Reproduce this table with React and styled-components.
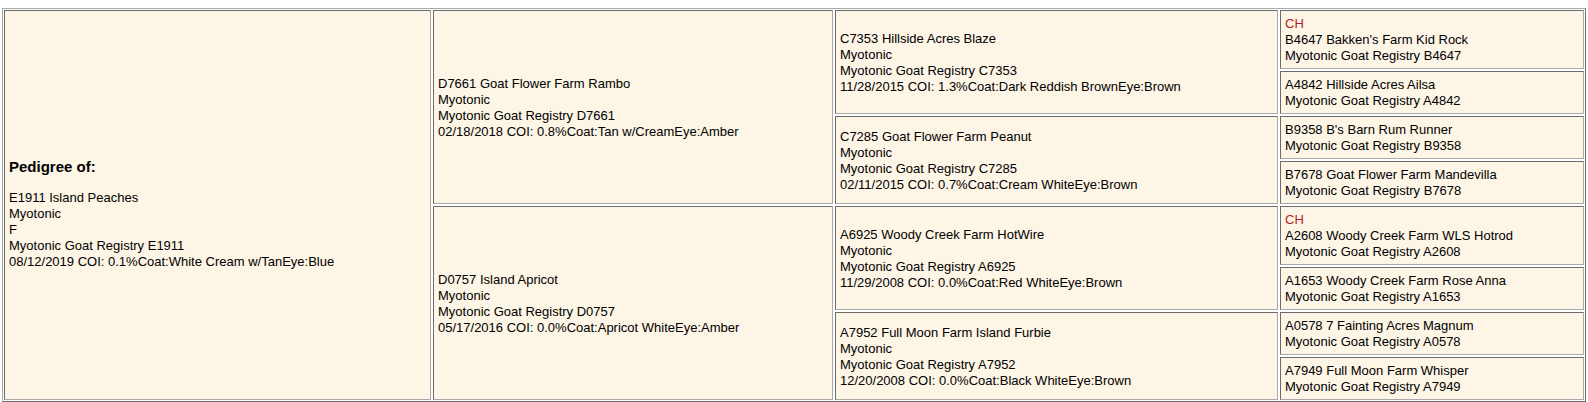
import React from 'react';
import styled, { createGlobalStyle } from 'styled-components';

const GlobalStyle = createGlobalStyle`
  body {
    margin: 8px 2px;
    background: #fff;
    font-family: "Liberation Sans", Arial, sans-serif;
  }
`;

const subject = [
  'E1911 Island Peaches',
  'Myotonic',
  'F',
  'Myotonic Goat Registry E1911',
  '08/12/2019 COI: 0.1%Coat:White Cream w/TanEye:Blue',
];

const parents = [
  ['D7661 Goat Flower Farm Rambo', 'Myotonic', 'Myotonic Goat Registry D7661', '02/18/2018 COI: 0.8%Coat:Tan w/CreamEye:Amber'],
  ['D0757 Island Apricot', 'Myotonic', 'Myotonic Goat Registry D0757', '05/17/2016 COI: 0.0%Coat:Apricot WhiteEye:Amber'],
];

const grandparents = [
  ['C7353 Hillside Acres Blaze', 'Myotonic', 'Myotonic Goat Registry C7353', '11/28/2015 COI: 1.3%Coat:Dark Reddish BrownEye:Brown'],
  ['C7285 Goat Flower Farm Peanut', 'Myotonic', 'Myotonic Goat Registry C7285', '02/11/2015 COI: 0.7%Coat:Cream WhiteEye:Brown'],
  ['A6925 Woody Creek Farm HotWire', 'Myotonic', 'Myotonic Goat Registry A6925', '11/29/2008 COI: 0.0%Coat:Red WhiteEye:Brown'],
  ['A7952 Full Moon Farm Island Furbie', 'Myotonic', 'Myotonic Goat Registry A7952', '12/20/2008 COI: 0.0%Coat:Black WhiteEye:Brown'],
];

const greatGrandparents = [
  { ch: true, lines: ["B4647 Bakken's Farm Kid Rock", 'Myotonic Goat Registry B4647'] },
  { lines: ['A4842 Hillside Acres Ailsa', 'Myotonic Goat Registry A4842'] },
  { lines: ["B9358 B's Barn Rum Runner", 'Myotonic Goat Registry B9358'] },
  { lines: ['B7678 Goat Flower Farm Mandevilla', 'Myotonic Goat Registry B7678'] },
  { ch: true, lines: ['A2608 Woody Creek Farm WLS Hotrod', 'Myotonic Goat Registry A2608'] },
  { lines: ['A1653 Woody Creek Farm Rose Anna', 'Myotonic Goat Registry A1653'] },
  { lines: ['A0578 7 Fainting Acres Magnum', 'Myotonic Goat Registry A0578'] },
  { lines: ['A7949 Full Moon Farm Whisper', 'Myotonic Goat Registry A7949'] },
];

const App = () => {
  return (
    <>
      <GlobalStyle />
      <Pedigree>
        <Cell $col={1} $row={1} $span={8}>
          <Title>Pedigree of:</Title>
          {subject.map((l, i) => <Line key={i}>{l}</Line>)}
        </Cell>

        {parents.map((p, i) => (
          <Cell key={p[0]} $col={2} $row={i * 4 + 1} $span={4}>
            {p.map((l, j) => <Line key={j}>{l}</Line>)}
          </Cell>
        ))}

        {grandparents.map((g, i) => (
          <Cell key={g[0]} $col={3} $row={i * 2 + 1} $span={2}>
            {g.map((l, j) => <Line key={j}>{l}</Line>)}
          </Cell>
        ))}

        {greatGrandparents.map((g, i) => (
          <Cell key={g.lines[0]} $col={4} $row={i + 1} $span={1}>
            {g.ch && <Line $red>CH</Line>}
            {g.lines.map((l, j) => <Line key={j}>{l}</Line>)}
          </Cell>
        ))}
      </Pedigree>
    </>
  );
};

export default App;

// Styled Components
const Pedigree = styled.div`
  display: grid;
  grid-template-columns: 427px 400px 443px 1fr;
  grid-auto-rows: auto;
  gap: 2px;
  padding: 1px;
  border: 1px solid;
  border-color: #a9a9a9 #6b6b6b #6b6b6b #a9a9a9;
  font-size: 13px;
  line-height: 16px;
  color: #000;
`;

const Cell = styled.div`
  grid-column: ${props => props.$col};
  grid-row: ${props => props.$row} / span ${props => props.$span};
  display: flex;
  flex-direction: column;
  justify-content: center;
  padding: 5px 4px 4px;
  background-color: #fdf5e6;
  border: 1px solid;
  border-color: #6b6b6b #a9a9a9 #a9a9a9 #6b6b6b;
`;

const Title = styled.div`
  font-size: 15px;
  line-height: 17px;
  font-weight: bold;
  margin: 17px 0 15px;
`;

const Line = styled.div`
  white-space: nowrap;
  color: ${props => props.$red ? '#b22222' : '#000'};
`;
